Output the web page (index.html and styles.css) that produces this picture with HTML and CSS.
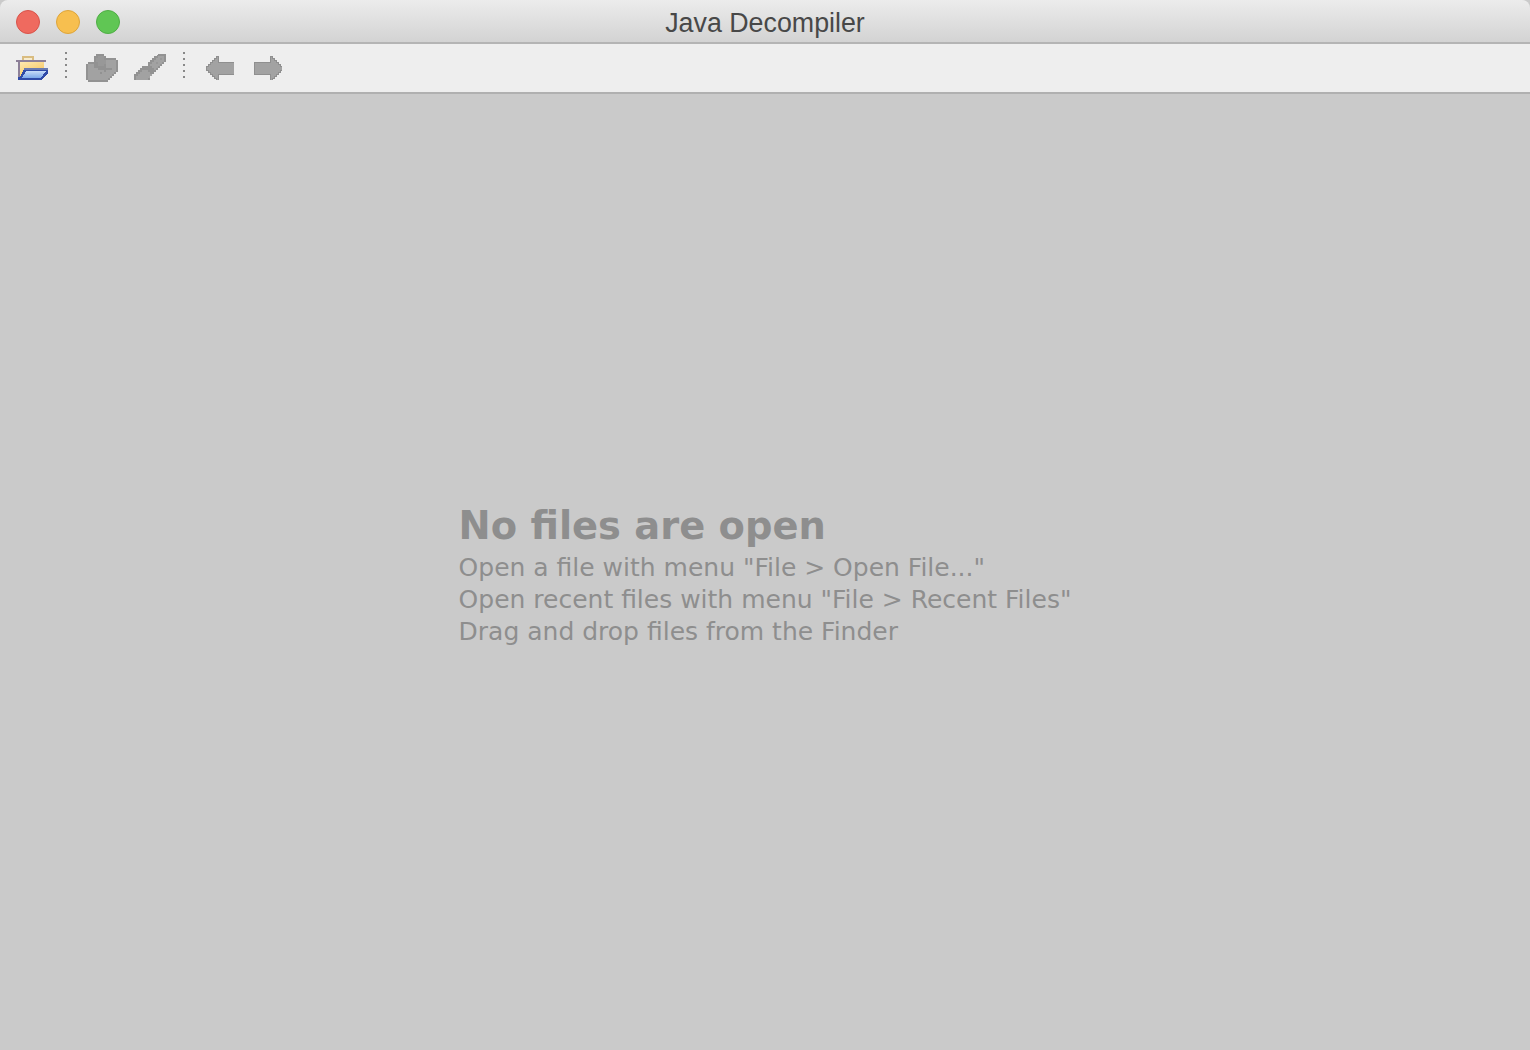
FILE: index.html
```html
<!DOCTYPE html>
<html lang="en">
<head>
  <meta charset="UTF-8" />
  <title>Java Decompiler</title>
  <link rel="stylesheet" href="styles.css">
</head>
<body>
  <div class="window">

    <!-- TITLE BAR -->
    <header class="titlebar">
      <div class="lights">
        <span class="light red"></span>
        <span class="light yellow"></span>
        <span class="light green"></span>
      </div>
      <div class="title">Java Decompiler</div>
    </header>

    <!-- TOOLBAR -->
    <nav class="toolbar">
      <svg class="icon" viewBox="0 0 32 32">
        <defs>
          <linearGradient id="paper" x1="0" y1="0" x2="0.6" y2="1">
            <stop offset="0" stop-color="#ffeab0" />
            <stop offset="1" stop-color="#f6c45e" />
          </linearGradient>
          <linearGradient id="front" x1="0" y1="0" x2="0" y2="1">
            <stop offset="0" stop-color="#c8dcf8" />
            <stop offset="1" stop-color="#7ca8ea" />
          </linearGradient>
        </defs>
        <path fill="#d9bc80" d="M6 4h12v4H6z" />
        <path fill="#f6ecd0" d="M8 6h8v2H8z" />
        <path fill="#8d8098" d="M0 8h30v2h-2v6H4v9H2V10H0z" />
        <path fill="url(#paper)" d="M4 10h24v7H10l-4 8H4z" />
        <path fill="#2f4aa8" d="M8 17h24v4l-6 7H2v-3h2z" />
        <path fill="#6a7ab0" d="M8 16h24v2H8z" />
        <path fill="url(#front)" d="M10 19h20l-5 7H6z" />
      </svg>

      <span class="sep"></span>

      <svg class="icon gray" viewBox="0 0 32 28">
        <path d="M10 0h8v2h2v2h10v2h2v12h-2v2h-2v2h-2v2h-2v2h-2v2H2v-2H0V10h2V8h6V2h2z" />
        <path class="light-area" d="M2 10h6v4h4v2h6v2h-4v2h-2v2h-2v2h-2v2H2z" />
        <path class="light-area" d="M20 6h10v12h-2v2h-2v2h-2v2h-2v2H8v-2h2v-2h2v-2h4v-2h4v-2h6v-2h-6z" />
        <path class="dark-area" d="M12 2h6v4h2v4h-2v2h-6V8h-2V4h2z" />
      </svg>

      <svg class="icon gray second" viewBox="0 0 32 28">
        <path d="M24 0h8v8h-2v2h-2v2h-2v2h-2v2h-2v2h-2v2h-2v2h-2v4H0v-6h2v-2h2v-2h2v-2h2v-2h6V8h2V6h2V4h2V2h2z" />
        <path class="light-area" d="M24 2h6v6h-2v2h-2v2h-2v2h-2v2h-2v-2h-2v-2h-2v-2h2V8h2V6h2V4h2z" />
        <path class="light-area" d="M8 16h6v2h2v2h2v2h-2v2h-2v2H2v-4h2v-2h2v-2h2z" />
        <path class="dark-area" d="M22 8h2v2h-2zM26 4h2v2h-2z" />
      </svg>

      <span class="sep after"></span>

      <svg class="arrow back" viewBox="0 0 14 12">
        <path d="M5 0h1v3h8v6h-8v3h-1v-1h-1v-1h-1v-1h-1v-1h-1v-1h-1v-2h1v-1h1v-1h1v-1h1v-1h1z" />
      </svg>
      <svg class="arrow fwd" viewBox="0 0 14 12">
        <path d="M9 0h-1v3h-8v6h8v3h1v-1h1v-1h1v-1h1v-1h1v-1h1v-2h-1v-1h-1v-1h-1v-1h-1v-1h-1z" />
      </svg>
    </nav>

    <!-- EMPTY STATE -->
    <main class="content">
      <div class="message">
        <h1>No files are open</h1>
        <p>Open a file with menu "File &gt; Open File..."</p>
        <p>Open recent files with menu "File &gt; Recent Files"</p>
        <p>Drag and drop files from the Finder</p>
      </div>
    </main>

  </div>
</body>
</html>
```

FILE: styles.css
```css
* { margin: 0; padding: 0; box-sizing: border-box; }
html, body {
  width: 100%;
  height: 100%;
  overflow: hidden;
  background: #cacaca;
  font-family: "DejaVu Sans", sans-serif;
}

.window {
  display: flex;
  flex-direction: column;
  height: 100%;
}

/* TITLE BAR */
.titlebar {
  position: relative;
  flex: none;
  height: 44px;
  display: flex;
  align-items: center;
  justify-content: center;
  background: linear-gradient(#ececec, #d3d3d3);
  border-bottom: 2px solid #b4b4b4;
  border-radius: 8px 8px 0 0;
}

.lights {
  position: absolute;
  top: 10px;
  left: 16px;
  display: flex;
  gap: 16px;
}

.light {
  width: 24px;
  height: 24px;
  border-radius: 50%;
  border: 1px solid;
}

.red { background: #ef6a5f; border-color: #d9534a; }
.yellow { background: #f7bf4f; border-color: #dea53a; }
.green { background: #60c654; border-color: #4fae45; }

.title {
  font-family: "Liberation Sans", sans-serif;
  font-size: 26.8px;
  color: #484848;
  margin-top: 4px;
}

/* TOOLBAR */
.toolbar {
  flex: none;
  height: 50px;
  display: flex;
  align-items: center;
  padding-left: 16px;
  background: #eeeeee;
  border-bottom: 2px solid #b0b0b0;
}

.icon {
  width: 32px;
  height: 32px;
  shape-rendering: crispEdges;
}

.icon.gray {
  height: 28px;
}

.icon.gray path { fill: #929292; }
.icon.gray path.light-area { fill: #a2a2a2; }
.icon.gray path.dark-area { fill: #989898; }

.second { margin-left: 16px; }

.sep {
  width: 2px;
  height: 26px;
  margin: -6px 19px 0 17px;
  background: repeating-linear-gradient(#888888 0, #888888 2px, transparent 2px, transparent 6px);
}

.sep.after { margin: -6px 21px 0 17px; }

.arrow {
  width: 28px;
  height: 24px;
  shape-rendering: crispEdges;
}

.arrow path {
  fill: #a2a2a2;
  stroke: #8f8f8f;
  stroke-width: 0.5;
}

.fwd { margin-left: 20px; }

/* EMPTY STATE */
.content {
  flex: 1;
  display: flex;
  align-items: center;
  justify-content: center;
}

.message {
  color: #8e8e8e;
  margin-top: 8px;
}

.message h1 {
  font-size: 38.4px;
  line-height: 46px;
  font-weight: bold;
  margin-top: -2px;
  margin-bottom: 3px;
}

.message p {
  font-size: 25px;
  line-height: 32px;
}
```
